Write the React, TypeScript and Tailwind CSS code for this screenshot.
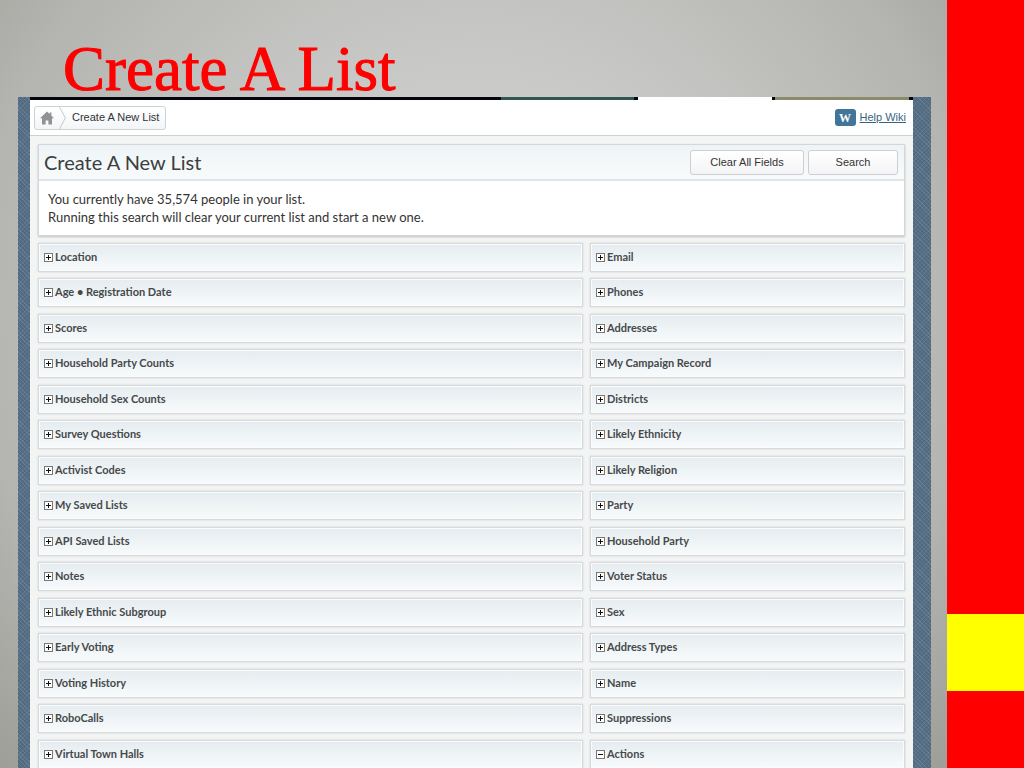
import React, { useState } from "react";

interface Section {
    name: string;
    open?: boolean;
}

const leftSections: Section[] = [
    { name: "Location" },
    { name: "Age • Registration Date" },
    { name: "Scores" },
    { name: "Household Party Counts" },
    { name: "Household Sex Counts" },
    { name: "Survey Questions" },
    { name: "Activist Codes" },
    { name: "My Saved Lists" },
    { name: "API Saved Lists" },
    { name: "Notes" },
    { name: "Likely Ethnic Subgroup" },
    { name: "Early Voting" },
    { name: "Voting History" },
    { name: "RoboCalls" },
    { name: "Virtual Town Halls" },
];

const rightSections: Section[] = [
    { name: "Email" },
    { name: "Phones" },
    { name: "Addresses" },
    { name: "My Campaign Record" },
    { name: "Districts" },
    { name: "Likely Ethnicity" },
    { name: "Likely Religion" },
    { name: "Party" },
    { name: "Household Party" },
    { name: "Voter Status" },
    { name: "Sex" },
    { name: "Address Types" },
    { name: "Name" },
    { name: "Suppressions" },
    { name: "Actions", open: true },
];

const SectionBar: React.FC<{ section: Section }> = ({ section }) => {
    const [open, setOpen] = useState(!!section.open);

    return (
        <li className="odd:mb-[6px] even:mb-[7px]">
            <button
                onClick={() => setOpen(!open)}
                aria-expanded={open}
                className="flex h-[29px] w-full items-center gap-[2px] border border-[#d6dadc] bg-linear-to-b from-[#e5ecef] to-[#f8fbfc] pl-[5px] text-left text-[11px] font-bold text-[#46494b] shadow-[0_0_2px_#d2d4d5,inset_0_0_0_1px_#fafcfd] cursor-pointer"
            >
                <svg className="h-[9px] w-[9px] shrink-0" viewBox="0 0 9 9" shapeRendering="crispEdges">
                    <rect x="0.5" y="0.5" width="8" height="8" fill="#fff" stroke="#777" />
                    <path d={open ? "M2 4.5h5" : "M2 4.5h5M4.5 2v5"} stroke="#111" />
                </svg>
                <span>{section.name}</span>
            </button>
        </li>
    );
};

const SectionColumn: React.FC<{ sections: Section[] }> = ({ sections }) => {
    return (
        <ul className="flex min-w-0 flex-col">
            {sections.map((section) => (
                <SectionBar key={section.name} section={section} />
            ))}
        </ul>
    );
};

const TopBar = () => {
    return (
        <div className="flex h-9 items-center justify-between border-b border-[#cfcfcf] bg-white pl-1 pr-[7px] font-['Liberation_Sans',Arial,sans-serif] text-[11px]">
            <nav className="flex h-6 items-center rounded-[3px] border border-[#cfd2d4] bg-linear-to-b from-white to-[#f3f6f9] pr-[6px]">
                <a href="#home" aria-label="Home" className="pl-[5px]">
                    <svg className="h-[14px] w-[14px]" viewBox="0 0 14 14" fill="#929292">
                        <path d="M7 0.5 0 7.3h2V13.5h3.6V9.5h2.8v4H12V7.3h2L11.4 4.7V1.5H9.6v1.6z" />
                    </svg>
                </a>
                <svg className="ml-[5px] mr-[6px] h-[22px] w-[7px]" viewBox="0 0 7 22" fill="none" stroke="#c6c9cc">
                    <path d="M0.5 0 6.3 11 0.5 22" />
                </svg>
                <span className="text-[#333]">Create A New List</span>
            </nav>
            <a href="#wiki" className="flex items-center gap-1 text-[#39647f]">
                <span className="flex h-[17px] w-[21px] items-center justify-center rounded-[3px] bg-[#42759a] font-['Liberation_Serif',serif] text-[12px] font-bold text-white">
                    W
                </span>
                <span className="underline">Help Wiki</span>
            </a>
        </div>
    );
};

const SearchPanel = () => {
    return (
        <section className="mb-[7px] border border-[#d3d7d9] bg-white shadow-[0_1px_2px_#bfc1c2]">
            <div className="flex h-9 items-center justify-between border-b-2 border-[#dfe5e8] bg-linear-to-b from-[#eef4f6] to-[#f8fbfc] pl-[5px] pr-[6px]">
                <h2 className="text-[20px] leading-[28px] text-[#3c3f41]">Create A New List</h2>
                <div className="flex gap-1 font-['Liberation_Sans',Arial,sans-serif] text-[11px] text-[#333]">
                    <button className="h-[25px] w-[114px] rounded-[3px] border border-[#cdd0d2] bg-linear-to-b from-white to-[#f4f4f6] cursor-pointer">
                        Clear All Fields
                    </button>
                    <button className="h-[25px] w-[90px] rounded-[3px] border border-[#cdd0d2] bg-linear-to-b from-white to-[#f4f4f6] cursor-pointer">
                        Search
                    </button>
                </div>
            </div>
            <div className="px-[9px] py-[9px] text-[13px] leading-[18px] text-[#333]">
                <p>You currently have 35,574 people in your list.</p>
                <p>Running this search will clear your current list and start a new one.</p>
            </div>
        </section>
    );
};

const App = () => {
    return (
        <div className="flex h-screen overflow-hidden font-[Lato,sans-serif]">
            <main className="flex min-w-0 flex-1 flex-col bg-[radial-gradient(ellipse_at_50%_40%,#d8d8d7_0%,#c5c5c3_45%,#b4b5b0_75%,#9d9e98_100%)] pl-[18px] pr-4">
                <h1 className="h-[97px] pl-[45px] pt-[37px] font-['Liberation_Serif',serif] text-[63px] leading-[64px] text-[#fe0000] [-webkit-text-stroke:1px_#fe0000]">
                    Create A List
                </h1>
                <div className="min-h-0 flex-1 bg-[#587187] bg-[repeating-linear-gradient(45deg,#66809680_0px,#66809680_1px,#4b647b80_1px,#4b647b80_3px),repeating-linear-gradient(-45deg,#6a8196_0px,#6a8196_1px,#566f84_1px,#566f84_3px)] pl-3 pr-[18px]">
                    <div className="h-full overflow-hidden bg-[#f3f4f4]">
                        {/* bottom edge of the site's menu tabs */}
                        <div className="flex h-[3px] bg-[#04060f]">
                            <div className="flex-1" />
                            <div className="w-[133px] bg-[#315653]" />
                            <div className="w-1" />
                            <div className="w-[134px] bg-white" />
                            <div className="w-[3px]" />
                            <div className="w-[134px] bg-[#8c8a6c]" />
                            <div className="w-1" />
                        </div>
                        <TopBar />
                        <div className="px-2 pt-2">
                            <SearchPanel />
                            <div className="grid grid-cols-[545fr_315fr] gap-[7px]">
                                <SectionColumn sections={leftSections} />
                                <SectionColumn sections={rightSections} />
                            </div>
                        </div>
                    </div>
                </div>
            </main>
            <aside className="flex w-[77px] flex-col bg-[#fe0000]">
                <div className="flex-1" />
                <div className="h-[77px] bg-[#ffff00]" />
                <div className="h-[77px]" />
            </aside>
        </div>
    );
};

export default App;
